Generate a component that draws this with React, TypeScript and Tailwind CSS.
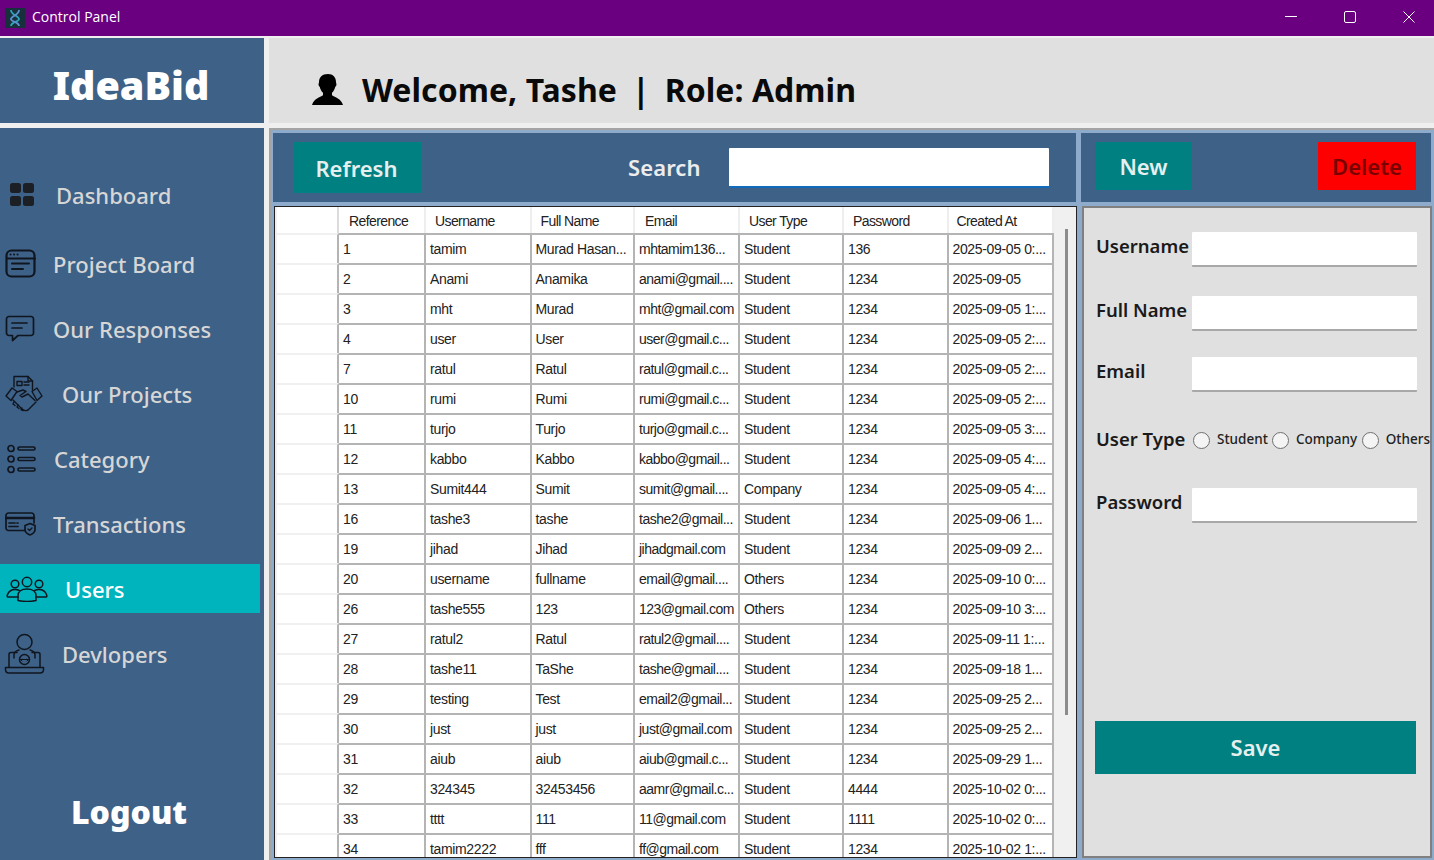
import type { ReactNode } from "react";

const users = [
  ["1", "tamim", "Murad Hasan...", "mhtamim136...", "Student", "136", "2025-09-05 0:..."],
  ["2", "Anami", "Anamika", "anami@gmail....", "Student", "1234", "2025-09-05"],
  ["3", "mht", "Murad", "mht@gmail.com", "Student", "1234", "2025-09-05 1:..."],
  ["4", "user", "User", "user@gmail.c...", "Student", "1234", "2025-09-05 2:..."],
  ["7", "ratul", "Ratul", "ratul@gmail.c...", "Student", "1234", "2025-09-05 2:..."],
  ["10", "rumi", "Rumi", "rumi@gmail.c...", "Student", "1234", "2025-09-05 2:..."],
  ["11", "turjo", "Turjo", "turjo@gmail.c...", "Student", "1234", "2025-09-05 3:..."],
  ["12", "kabbo", "Kabbo", "kabbo@gmail...", "Student", "1234", "2025-09-05 4:..."],
  ["13", "Sumit444", "Sumit", "sumit@gmail....", "Company", "1234", "2025-09-05 4:..."],
  ["16", "tashe3", "tashe", "tashe2@gmail...", "Student", "1234", "2025-09-06 1..."],
  ["19", "jihad", "Jihad", "jihadgmail.com", "Student", "1234", "2025-09-09 2..."],
  ["20", "username", "fullname", "email@gmail....", "Others", "1234", "2025-09-10 0:..."],
  ["26", "tashe555", "123", "123@gmail.com", "Others", "1234", "2025-09-10 3:..."],
  ["27", "ratul2", "Ratul", "ratul2@gmail....", "Student", "1234", "2025-09-11 1:..."],
  ["28", "tashe11", "TaShe", "tashe@gmail....", "Student", "1234", "2025-09-18 1..."],
  ["29", "testing", "Test", "email2@gmail...", "Student", "1234", "2025-09-25 2..."],
  ["30", "just", "just", "just@gmail.com", "Student", "1234", "2025-09-25 2..."],
  ["31", "aiub", "aiub", "aiub@gmail.c...", "Student", "1234", "2025-09-29 1..."],
  ["32", "324345", "32453456", "aamr@gmail.c...", "Student", "4444", "2025-10-02 0:..."],
  ["33", "tttt", "111", "11@gmail.com", "Student", "1111", "2025-10-02 0:..."],
  ["34", "tamim2222", "fff", "ff@gmail.com", "Student", "1234", "2025-10-02 1:..."],
];

const headers = ["Reference", "Username", "Full Name", "Email", "User Type", "Password", "Created At"];

const stroke = { fill: "none", stroke: "#10161f", strokeWidth: 2, strokeLinecap: "round", strokeLinejoin: "round" } as const;

const DashboardIcon = () => (
  <svg width="26" height="26" viewBox="0 0 26 26" fill="#1c1f24">
    <rect x="1" y="1" width="11" height="10" rx="2.5" />
    <rect x="14" y="1" width="11" height="10" rx="2.5" />
    <rect x="1" y="14" width="11" height="10" rx="2.5" />
    <rect x="14" y="14" width="11" height="10" rx="2.5" />
  </svg>
);

const BoardIcon = () => (
  <svg width="32" height="30" viewBox="0 0 32 30" {...stroke}>
    <rect x="1.5" y="1.5" width="28" height="26" rx="5" strokeWidth="2.2" />
    <path d="M2 9.5h28" />
    <path d="M7 14.5h17M7 20h11" />
    <path d="M5.5 5.5h.1M9 5.5h.1M12.5 5.5h.1" />
  </svg>
);

const ChatIcon = () => (
  <svg width="30" height="28" viewBox="0 0 30 28" {...stroke} strokeWidth="1.7">
    <path d="M4 1.5h22a2.5 2.5 0 0 1 2.5 2.5v14a2.5 2.5 0 0 1-2.5 2.5H13l-5.5 5v-5H4A2.5 2.5 0 0 1 1.5 18V4A2.5 2.5 0 0 1 4 1.5z" />
    <path d="M7 8h15M7 13h10" />
  </svg>
);

const HandshakeIcon = () => (
  <svg width="40" height="40" viewBox="0 0 40 40" {...stroke} strokeWidth="1.4">
    <path d="M10 13V2.5h14l4.5 4.500v9" />
    <path d="M24 2.5V7h4.5" />
    <path d="M13 7.5h5v4h-5zM20 8h5M20 11h5" />
    <path d="M2 22l6-8 5 3.5-6 9z" />
    <path d="M38 22l-5-8-5 3.5 5 9z" />
    <path d="M13 18l6-2 3 1.5-6 4 2 1.5 6-3 7 6.5" />
    <path d="M9 26l9 9c2 2 4 2 6 1l8-8" />
    <path d="M10 28l-1 2 2 1.5M14 31l-1 2 2 1.5M18 34l-1 1.500 2 1" />
  </svg>
);

const ListIcon = () => (
  <svg width="30" height="30" viewBox="0 0 30 30" {...stroke} strokeWidth="1.7">
    <circle cx="4" cy="4.5" r="3" />
    <circle cx="4" cy="15" r="3" />
    <circle cx="4" cy="25.5" r="3" />
    <rect x="11" y="3" width="17" height="3" rx="1.5" />
    <rect x="11" y="13.5" width="17" height="3" rx="1.5" />
    <rect x="11" y="24" width="17" height="3" rx="1.5" />
  </svg>
);

const CardIcon = () => (
  <svg width="32" height="24" viewBox="0 0 32 24" {...stroke} strokeWidth="1.7">
    <path d="M20 18.5H3.5A2.5 2.5 0 0 1 1 16V3.5A2.5 2.5 0 0 1 3.5 1h23A2.5 2.5 0 0 1 29 3.5V11" />
    <path d="M1 6h28" strokeWidth="2.6" />
    <path d="M4 11h6M4 14.5h9M12 11h1" />
    <path d="M25 11.5l5 2v4c0 3-2.5 4.5-5 5.500-2.500-1-5-2.500-5-5.500v-4z" />
    <path d="M23 17l1.500 1.500 2.500-2.500" strokeWidth="1.300" />
  </svg>
);

const UsersIcon = () => (
  <svg width="42" height="26" viewBox="0 0 42 26" {...stroke} strokeWidth="1.500">
    <circle cx="21" cy="6" r="4.700" />
    <circle cx="9" cy="8" r="3.800" />
    <circle cx="33" cy="8" r="3.800" />
    <path d="M12 24.500v-5c0-4 3.500-6.500 9-6.500s9 2.500 9 6.500v5c-5 1-13 1-18 0z" />
    <path d="M12 21H2c-1 0-1-1-.5-2.500C3 15 6 13.500 9 13.500c1.500 0 3 .3 4.300 1" />
    <path d="M30 21h10c1 0 1-1 .5-2.500C39 15 36 13.500 33 13.500c-1.500 0-3 .3-4.300 1" />
  </svg>
);

const DeveloperIcon = () => (
  <svg width="42" height="42" viewBox="0 0 42 42" {...stroke} strokeWidth="1.500">
    <circle cx="20.500" cy="9" r="7.500" />
    <path d="M10 25v-3c0-3 3-4.500 5-5M31 25v-3c0-3-3-4.500-5-5" />
    <path d="M5 34V21.500c0-1.200.8-2 2-2h6M36 34V21.500c0-1.200-.8-2-2-2h-6" />
    <path d="M1.500 34.500h38v2c0 2-1.500 3.500-3.500 3.500H5c-2 0-3.500-1.500-3.500-3.500z" />
    <circle cx="20.500" cy="26.500" r="5" />
    <path d="M15.500 26.500h10M18 26l-1 1 1 1M23 26l1 1-1 1" strokeWidth="1" />
  </svg>
);

type NavItem = { label: string; icon: ReactNode; iconBox: string; rowGap: string; active?: boolean };

const navItems: NavItem[] = [
  { label: "Dashboard", icon: <DashboardIcon />, iconBox: "w-[56px] pl-[9px]", rowGap: "mt-[42px]" },
  { label: "Project Board", icon: <BoardIcon />, iconBox: "w-[53px] pl-[5px]", rowGap: "mt-[20px]" },
  { label: "Our Responses", icon: <ChatIcon />, iconBox: "w-[53px] pl-[5px]", rowGap: "mt-[16px]" },
  { label: "Our Projects", icon: <HandshakeIcon />, iconBox: "w-[62px] pl-[4px]", rowGap: "mt-[16px]" },
  { label: "Category", icon: <ListIcon />, iconBox: "w-[54px] pl-[7px]", rowGap: "mt-[16px]" },
  { label: "Transactions", icon: <CardIcon />, iconBox: "w-[53px] pl-[5px]", rowGap: "mt-[16px]" },
  { label: "Users", icon: <UsersIcon />, iconBox: "w-[65px] pl-[6px]", rowGap: "mt-[16px]", active: true },
  { label: "Devlopers", icon: <DeveloperIcon />, iconBox: "w-[62px] pl-[4px]", rowGap: "mt-[16px]" },
];

const GRID = "grid grid-cols-[62px_87px_105.500px_103.500px_105px_104px_104.500px_105px]";

// left inset of each header title inside its column
const headerInset = ["pl-[10px]", "pl-[9px]", "pl-[9px]", "pl-[10px]", "pl-[9px]", "pl-[9px]", "pl-[8px]"];

function Sidebar() {
  return (
    <aside className="flex h-full w-[264px] flex-col bg-[#3e6187]">
      {navItems.map((item) => (
        <div
          key={item.label}
          className={`${item.rowGap} flex h-[49px] w-[260px] shrink-0 items-center ${item.active ? "bg-[#00b4bd]" : ""}`}
        >
          <div className={`${item.iconBox} flex shrink-0 items-center`}>{item.icon}</div>
          <span className={`text-[22px] leading-none font-medium ${item.active ? "text-white" : "text-[#d6d6d6]"}`}>
            {item.label}
          </span>
        </div>
      ))}
      <div className="mt-auto pr-[6px] pb-[32px] text-center text-[32px] leading-none font-black text-white">Logout</div>
    </aside>
  );
}

function UsersTable() {
  return (
    <div className="flex h-full w-[803px] overflow-hidden border border-[#222] bg-[#f0f0f0] pl-[2px] font-['Liberation_Sans',sans-serif] text-[14px] tracking-[-0.35px] text-[#222]">
      <div className="w-[776px] shrink-0">
        <div className={`${GRID} h-[26px] items-center bg-white tracking-[-0.6px]`}>
          <div className="h-full border-r-2 border-[#dcdcdc]" />
          {headers.map((h, i) => (
            <div key={h} className={`flex h-full items-center border-r-2 border-[#eeeeee] pt-[3px] ${headerInset[i]}`}>
              {h}
            </div>
          ))}
        </div>
        {users.map((row) => (
          <div key={row[0]} className={`${GRID} h-[30px]`}>
            <div className="h-full border-t-2 border-r-2 border-[#f0f0f0] border-r-[#b4b4b4] bg-white" />
            {row.map((cell, i) => (
              <div
                key={i}
                className={`flex items-center overflow-hidden border-t-2 border-r-2 border-[#b4b4b4] bg-white pl-[4px] whitespace-nowrap ${i === 3 ? "tracking-[-0.5px]" : ""}`}
              >
                {cell}
              </div>
            ))}
          </div>
        ))}
      </div>
      <div className="flex flex-1 justify-center pt-[22px] pl-[3px]">
        <div className="h-[486px] w-[3px] bg-[#8b8b8b]" />
      </div>
    </div>
  );
}

function Field({ label, className }: { label: string; className: string }) {
  return (
    <div className={`flex items-center ${className}`}>
      <label className="w-[96px] shrink-0 pb-[6px] text-[18.5px] leading-none font-semibold whitespace-nowrap text-[#1a1a1a]">{label}</label>
      <input className="h-[35px] w-[225px] rounded-[1px] border-b-2 border-[#a8a8a8] bg-white outline-none" />
    </div>
  );
}

function Radio({ label, width }: { label: string; width: string }) {
  return (
    <label className={`flex items-center ${width}`}>
      <span className="mr-[7px] h-[17px] w-[17px] shrink-0 rounded-full border-[1.5px] border-[#6f6f6f] bg-[#f4f4f4]" />
      <span className="text-[13.5px] leading-none font-medium whitespace-nowrap text-[#222]">{label}</span>
    </label>
  );
}

export default function App() {
  return (
    <div className="flex h-[860px] w-[1434px] flex-col overflow-hidden bg-[#efefef] font-['Noto_Sans',sans-serif]">
      <header className="flex h-[36px] shrink-0 items-center bg-[#6a007f] pl-[5px] text-white">
        <svg width="20" height="20" viewBox="0 0 20 20">
          <rect width="20" height="20" fill="#17303c" />
          <path d="M6 2c0 5 8 6 8 9s-8 3-8 7" fill="none" stroke="#2aa5b8" strokeWidth="1.800" />
          <path d="M14 2c0 5-8 6-8 9s8 3 8 7" fill="none" stroke="#5c8fd0" strokeWidth="1.800" />
        </svg>
        <span className="ml-[7px] pb-[3px] font-['Open_Sans',sans-serif] text-[14px]">Control Panel</span>
        <div className="ml-auto flex items-center pr-[19px] pb-[2px]">
          <svg width="12" height="12" viewBox="0 0 12 12" stroke="#fff" fill="none" className="mr-[47px]"><path d="M0 5.500h12" /></svg>
          <svg width="12" height="12" viewBox="0 0 12 12" stroke="#fff" fill="none" className="mr-[47px]"><rect x=".5" y=".5" width="11" height="11" rx="1.500" /></svg>
          <svg width="12" height="12" viewBox="0 0 12 12" stroke="#fff" fill="none"><path d="M.5.500l11 11M11.500.500l-11 11" /></svg>
        </div>
      </header>

      <div className="mt-[2px] flex h-[85px] shrink-0 gap-[5px]">
        <div className="flex w-[264px] items-center justify-center bg-[#3e6187] pt-[10px] pr-[2px] text-[39.5px] leading-none font-black text-white">IdeaBid</div>
        <div className="flex flex-1 items-center bg-[#e0e0e0] pt-[19px] pl-[43px]">
          <svg width="32" height="32" viewBox="0 0 32 32" fill="#000">
            <path d="M16 0c5 0 8 3.500 8 8 0 1 .6 1.500.4 3-.2 1-.8 1.500-1.200 2-.6 2.500-1.700 4.500-3.200 5.800v2.500c3 2.200 9 3 11 9.700H0c2-6.700 8-7.500 11-9.700v-2.500C9.500 17.500 8.400 15.500 7.800 13c-.4-.5-1-1-1.200-2-.2-1.500.4-2 .4-3 0-4.500 3-8 9-8z" />
          </svg>
          <span className="ml-[18px] text-[32px] leading-none font-bold tracking-[0.05px] text-[#0a0a0a]">
            Welcome, Tashe<span className="mx-[15px]">|</span>Role: Admin
          </span>
        </div>
      </div>

      <div className="mt-[5px] flex min-h-0 flex-1 gap-[5px]">
        <Sidebar />
        <main className="flex min-w-0 flex-1 flex-col gap-[4px] border-t-2 border-l-2 border-[#a4a4a4] bg-[#8fabcb] pt-[3px] pl-[2px]">
          <div className="flex h-[69px] shrink-0 gap-[5px]">
            <div className="flex w-[803px] items-center bg-[#3e6187] pl-[21px]">
              <button className="h-[51px] w-[127px] bg-[#008080] pt-[2px] pr-[2px] text-[22px] font-semibold text-[#e6efef]">Refresh</button>
              <span className="ml-[207px] pb-[1px] text-[22px] leading-none font-semibold tracking-[0.1px] text-[#ececec]">Search</span>
              <input className="ml-[28px] h-[40px] w-[320px] rounded-[1px] border-b-2 border-[#0f6cbd] bg-white outline-none" />
            </div>
            <div className="flex w-[350px] items-start justify-between bg-[#3e6187] pt-[9px] pr-[15px] pl-[14px]">
              <button className="h-[48px] w-[97px] bg-[#008080] text-[22px] font-semibold text-[#e6efef]">New</button>
              <button className="h-[48px] w-[98px] bg-[#ff0000] text-[22px] font-semibold text-[#7a0000]">Delete</button>
            </div>
          </div>
          <div className="flex min-h-0 flex-1 gap-[5px] pb-[2px] pl-[1px]">
            <UsersTable />
            <section className="flex w-[350px] flex-col border-2 border-[#808080] bg-[#e0e0e0] pl-[12px]">
              <Field label="Username" className="mt-[24px]" />
              <Field label="Full Name" className="mt-[29px]" />
              <Field label="Email" className="mt-[26px]" />
              <div className="mt-[38px] flex h-[20px] items-center">
                <span className="w-[97px] shrink-0 pb-[2px] text-[18.5px] leading-none font-semibold whitespace-nowrap text-[#1a1a1a]">User Type</span>
                <Radio label="Student" width="w-[79px]" />
                <Radio label="Company" width="w-[90px]" />
                <Radio label="Others" width="" />
              </div>
              <Field label="Password" className="mt-[38px]" />
              <button className="mt-[198px] -ml-[1px] h-[53px] w-[321px] bg-[#008080] text-[22px] font-semibold text-[#e6efef]">Save</button>
            </section>
          </div>
        </main>
      </div>
    </div>
  );
}
